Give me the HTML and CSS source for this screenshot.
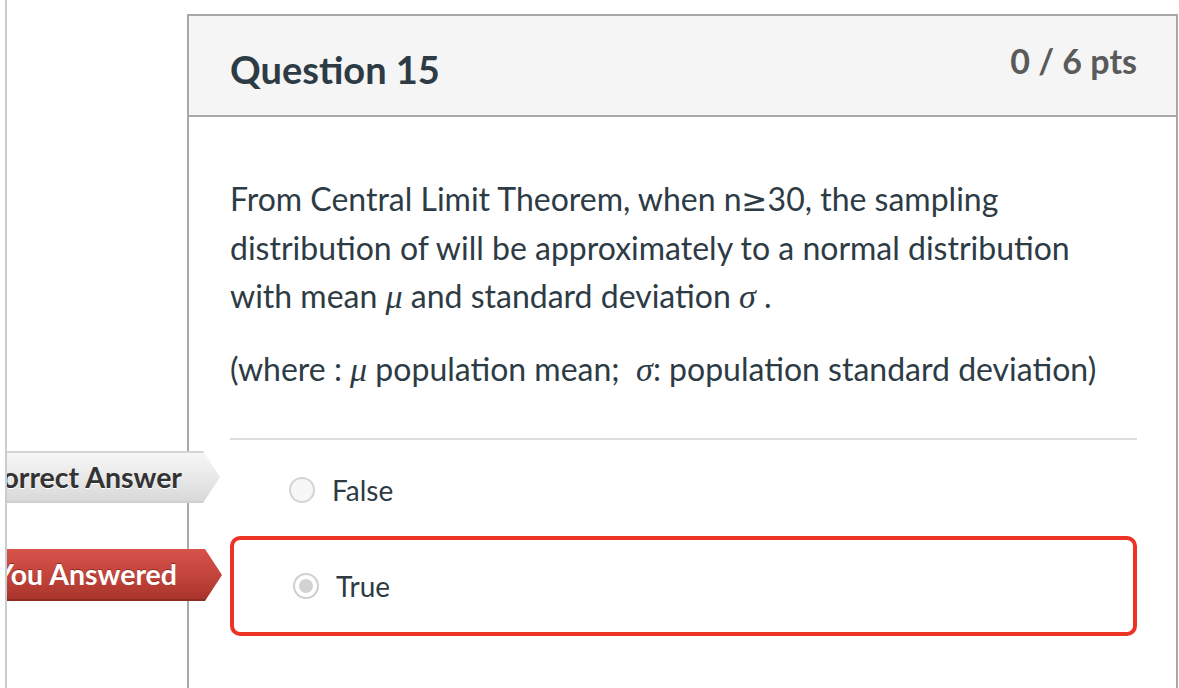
FILE: index.html
```html
<!DOCTYPE html>
<html lang="en">
<head>
<meta charset="utf-8">
<title>Question 15</title>
<link rel="stylesheet" href="styles.css">
</head>
<body>
<div class="page">
  <div class="question">
    <div class="question-header">
      <h2 class="question-title">Question 15</h2>
      <div class="question-points">0 / 6 pts</div>
    </div>
    <div class="question-body">
      <div class="question-text">
        <p>From Central Limit Theorem, when n<span class="geq">≥</span>30, the sampling distribution of will be approximately to a normal distribution with mean <span class="math">μ</span> and standard deviation <span class="math">σ</span> .</p>
        <p>(where : <span class="math">μ</span> population mean;&nbsp; <span class="math">σ</span>: population standard deviation)</p>
      </div>
      <div class="answers">
        <div class="answer">
          <span class="answer-arrow correct">Correct Answer</span>
          <span class="radio"></span>
          <span class="answer-text">False</span>
        </div>
        <div class="answer selected">
          <span class="answer-arrow wrong">You Answered</span>
          <span class="radio checked"></span>
          <span class="answer-text">True</span>
        </div>
      </div>
    </div>
  </div>
</div>
</body>
</html>
```
FILE: styles.css
```css
* { box-sizing: border-box; }
html, body {
  margin: 0;
  padding: 0;
  background: #ffffff;
}
body {
  font-family: Lato, "Noto Sans", sans-serif;
  color: #2d3b45;
}
.page {
  margin-left: 5px;
  height: 688px;
  border-left: 2px solid #c8cdd1;
  overflow: hidden;
  padding-top: 14px;
}
.question {
  margin-left: 180px;
  width: 991px;
  min-height: 720px;
  border: 2px solid #a8a8a8;
  border-bottom: none;
}
.question-header {
  display: flex;
  justify-content: space-between;
  align-items: flex-start;
  height: 101px;
  background: #f5f5f5;
  border-bottom: 2px solid #a8a8a8;
  padding: 24px 39px 0 41px;
}
.question-title {
  margin: 6px 0 0 0;
  font-size: 38px;
  font-weight: 700;
  line-height: normal;
  color: #2d3b45;
}
.question-points {
  font-size: 34px;
  font-weight: 700;
  line-height: normal;
  color: #5a5a5a;
}
.question-body {
  padding: 58px 39px 0 41px;
}
.question-text p {
  margin: 0 0 24px 0;
  font-size: 32px;
  line-height: 48px;
}
.question-text p:last-child { margin-bottom: 0; }
.math {
  font-family: "Liberation Serif", "DejaVu Serif", serif;
  font-style: italic;
  font-size: 34px;
}
.geq {
  font-family: "DejaVu Sans", sans-serif;
  font-size: 31px;
}
.answers {
  margin-top: 44px;
  border-top: 2px solid #dddddd;
  padding-top: 4px;
}
.answer {
  position: relative;
  display: flex;
  align-items: center;
  height: 92px;
  padding-left: 59px;
}
.answer.selected {
  height: 100px;
  border: 4px solid #ec3326;
  border-radius: 10px;
}
.radio {
  width: 26px;
  height: 26px;
  border-radius: 50%;
  border: 2px solid #d4d4d4;
  background: #f7f7f7;
  flex: none;
  position: relative;
}
.radio.checked {
  background: #ffffff;
  border-color: #cfcfcf;
}
.radio.checked::after {
  content: "";
  position: absolute;
  left: 4px;
  top: 4px;
  width: 14px;
  height: 14px;
  border-radius: 50%;
  background: #d2d2d2;
}
.answer-text {
  margin-left: 17px;
  font-size: 28px;
  color: #2d3b45;
}
.answer-arrow {
  position: absolute;
  height: 52px;
  width: 270px;
  text-align: right;
  font-size: 28.5px;
  font-weight: 700;
  line-height: 52px;
  white-space: nowrap;
  clip-path: polygon(0 0, calc(100% - 17px) 0, 100% 50%, calc(100% - 17px) 100%, 0 100%);
}
.answer-arrow.correct {
  top: 7px;
  right: calc(100% + 10px);
  padding-right: 38px;
  color: #333333;
  background: linear-gradient(#f6f6f6, #e6e6e6 60%, #d8d8d8);
  border-top: 2px solid #d4d4d4;
  border-bottom: 2px solid #cfcfcf;
  line-height: 48px;
  text-shadow: 0 1px 0 #ffffff;
}
.answer-arrow.wrong {
  top: 9px;
  right: calc(100% + 12px);
  padding-right: 45px;
  color: #ffffff;
  background: linear-gradient(#d6534a, #c2433a 55%, #a8352c);
  border-bottom: 2px solid #8e2b23;
  line-height: 50px;
  text-shadow: 0 -1px 0 #8e2b23;
}
```
